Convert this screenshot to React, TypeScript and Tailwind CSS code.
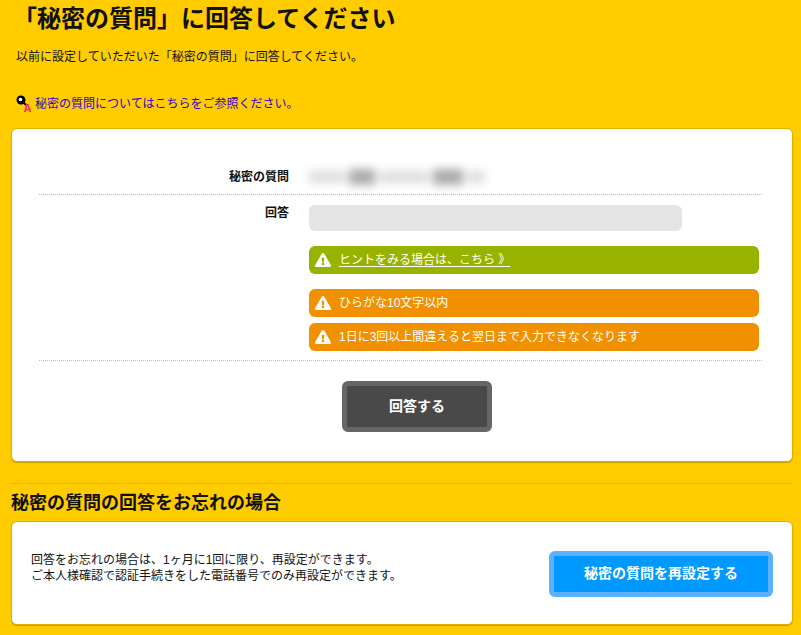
import { FaExclamationTriangle } from 'react-icons/fa';

const font = "font-['Liberation_Sans','Noto_Sans_CJK_JP',sans-serif]";

function Notice({ color, children }: { color: string; children: React.ReactNode }) {
  return (
    <div className={`flex h-7 w-[450px] items-center gap-[7px] rounded-md pl-[6px] text-xs text-white ${color}`}>
      <FaExclamationTriangle className="h-4 w-4 shrink-0" />
      {children}
    </div>
  );
}

export default function App() {
  return (
    <div className={`${font} h-[635px] overflow-hidden bg-[#ffcc00] pr-[8px] pl-[11px] text-[#111]`}>
      {/* Heading */}
      <h1 className="pt-[4px] text-2xl leading-[30px] font-bold text-[#111]">
        <span className="pl-[2px]">「秘密の質問」に回答してください</span>
      </h1>
      <p className="mt-[14px] pl-[5px] text-xs leading-[18px]">
        以前に設定していただいた「秘密の質問」に回答してください。
      </p>
      <p className="mt-[29px] flex items-center gap-[3px] pl-[5px] text-xs leading-[18px] text-[#3300cc]">
        <svg width="16" height="18" viewBox="0 0 16 18" className="shrink-0">
          <circle cx="5" cy="5" r="4.5" fill="#000" />
          <circle cx="4.5" cy="4.5" r="1.8" fill="#fff" />
          <path d="M7 7 L10 10" stroke="#000" strokeWidth="2" />
          <text x="7.5" y="17" fontSize="11" fontWeight="bold" fill="#ff2277">A</text>
        </svg>
        秘密の質問についてはこちらをご参照ください。
      </p>

      {/* Answer card */}
      <div className="mt-[15px] h-[334px] rounded-md border border-[#e0b000] bg-white pt-[29px] pr-[30px] pl-[27px] shadow-[0_1px_1px_rgba(150,110,0,0.5)]">
        <div className="flex h-[37px] items-center border-b border-dotted border-[#bbb] pt-[2px]">
          <div className="w-[250px] text-right text-xs font-bold">秘密の質問</div>
          <div className="ml-[20px] flex h-[18px] w-[178px] items-center gap-1 blur-[5px]">
            <div className="h-3 w-[36px] bg-[#ddd]" />
            <div className="h-4 w-[26px] bg-[#aaa]" />
            <div className="h-3 w-[50px] bg-[#ddd]" />
            <div className="h-4 w-[30px] bg-[#aaa]" />
            <div className="h-3 w-[18px] bg-[#ddd]" />
          </div>
        </div>

        <div className="flex border-b border-dotted border-[#bbb] pt-[10px] pb-[9px]">
          <div className="w-[250px] text-right text-xs leading-[16px] font-bold">回答</div>
          <div className="ml-[20px] flex flex-col">
            <div className="h-[26px] w-[373px] rounded-md bg-[#e4e4e4]" />
            <div className="mt-[15px]">
              <Notice color="bg-[#97b300]">
                <span className="ml-[1px] underline underline-offset-2">ヒントをみる場合は、こちら 》</span>
              </Notice>
            </div>
            <div className="mt-[15px]">
              <Notice color="bg-[#f29100]">
                <span className="ml-[1px]">ひらがな10文字以内</span>
              </Notice>
            </div>
            <div className="mt-[6px]">
              <Notice color="bg-[#f29100]">
                <span className="ml-[1px]">1日に3回以上間違えると翌日まで入力できなくなります</span>
              </Notice>
            </div>
          </div>
        </div>

        <div className="mt-[20px] flex justify-center pl-[33px]">
          <button className="h-[51px] w-[150px] rounded-md border-[5px] border-[#666] bg-[#494949] pb-[2px] text-sm font-bold text-white">
            回答する
          </button>
        </div>
      </div>

      {/* Forgot answer */}
      <div className="mt-[21px] border-t border-[#e8b800] pt-[6px]">
        <h2 className="text-lg leading-[27px] font-bold">秘密の質問の回答をお忘れの場合</h2>
      </div>
      <div className="mt-[4px] flex h-[104px] items-center justify-between rounded-md border border-[#e0b000] bg-white px-[19px] shadow-[0_1px_1px_rgba(150,110,0,0.5)]">
        <div className="mb-[10px] text-xs">
          <div className="h-4 leading-4">回答をお忘れの場合は、1ヶ月に1回に限り、再設定ができます。</div>
          <div className="h-4 leading-4">ご本人様確認で認証手続きをした電話番号でのみ再設定ができます。</div>
        </div>
        <button className="mt-[2px] h-[46px] w-[224px] rounded-md border-[5px] border-[#5cb0ff] bg-[#0099ff] pb-[2px] text-sm font-bold text-white">
          秘密の質問を再設定する
        </button>
      </div>
    </div>
  );
}
